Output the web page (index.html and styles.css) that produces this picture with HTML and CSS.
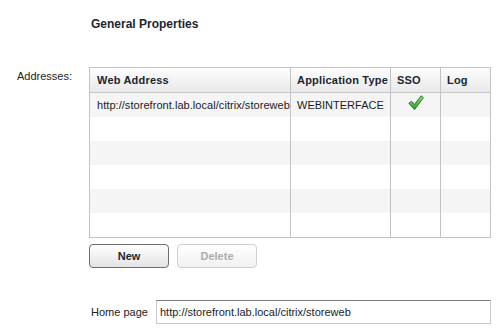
FILE: index.html
```html
<!DOCTYPE html>
<html>
<head>
<meta charset="utf-8">
<link rel="stylesheet" href="styles.css">
</head>
<body>
<div class="page">
  <h1 class="title">General Properties</h1>
  <div class="field-row">
    <div class="field-label">Addresses:</div>
    <div class="field-body">
      <div class="grid-table">
        <div class="th first">Web Address</div>
        <div class="th">Application Type</div>
        <div class="th">SSO</div>
        <div class="th">Log</div>

        <div class="td first alt">http://storefront.lab.local/citrix/storeweb</div>
        <div class="td alt">WEBINTERFACE</div>
        <div class="td alt check-cell">
          <svg width="16" height="16" viewBox="0 0 16 16">
            <defs>
              <linearGradient id="g" x1="0" y1="0" x2="0" y2="1">
                <stop offset="0" stop-color="#9be07a"/>
                <stop offset="1" stop-color="#1f9a22"/>
              </linearGradient>
            </defs>
            <polygon points="0.8,8.2 3.6,6.2 6.4,9.6 13,0.8 15.4,2.6 6.6,14.6" fill="url(#g)" stroke="#2d7f2a" stroke-width="1" stroke-linejoin="round"/>
          </svg>
        </div>
        <div class="td alt"></div>

        <div class="td first"></div><div class="td"></div><div class="td"></div><div class="td"></div>
        <div class="td first alt"></div><div class="td alt"></div><div class="td alt"></div><div class="td alt"></div>
        <div class="td first"></div><div class="td"></div><div class="td"></div><div class="td"></div>
        <div class="td first alt"></div><div class="td alt"></div><div class="td alt"></div><div class="td alt"></div>
        <div class="td first"></div><div class="td"></div><div class="td"></div><div class="td"></div>
      </div>
      <div class="buttons">
        <button class="btn">New</button>
        <button class="btn disabled">Delete</button>
      </div>
      <div class="home-row">
        <label class="home-label">Home page</label>
        <input class="home-input" type="text" value="http://storefront.lab.local/citrix/storeweb">
      </div>
    </div>
  </div>
</div>
</body>
</html>
```
FILE: styles.css
```css
html, body {
  margin: 0;
  padding: 0;
  background: #ffffff;
}
body {
  font-family: "Liberation Sans", Arial, sans-serif;
  font-size: 11px;
  color: #1c1c1c;
  width: 498px;
  height: 332px;
  overflow: hidden;
}
.page {
  padding-top: 17px;
}
.title {
  margin: 0 0 0 91px;
  font-size: 12px;
  line-height: 14px;
  font-weight: bold;
  color: #1b2633;
}
.field-row {
  display: grid;
  grid-template-columns: 89px 402px;
  margin-top: 36px;
}
.field-label {
  text-align: right;
  padding-right: 17px;
  padding-top: 3px;
  line-height: 13px;
  color: #222;
}
.grid-table {
  display: grid;
  grid-template-columns: 200px 100px 50px 50px;
  grid-template-rows: 25px;
  grid-auto-rows: 24px;
  border: 1px solid #c3c3c3;
  width: 400px;
}
.th, .td {
  border-left: 1px solid #c3c3c3;
  padding-left: 6px;
  line-height: 24px;
  white-space: nowrap;
  overflow: hidden;
}
.th.first, .td.first {
  border-left: none;
  padding-left: 7px;
}
.th {
  font-weight: bold;
  color: #1b2633;
  background: linear-gradient(#fdfdfd, #e9e9e9);
  border-bottom: 1px solid #c6c6c6;
  letter-spacing: 0.2px;
}
.td {
  background: #ffffff;
  color: #1c1c1c;
  line-height: 23px;
  padding-top: 1px;
}
.td.alt {
  background: #f5f5f5;
}
.td.first {
  letter-spacing: 0.05px;
}
.check-cell {
  display: flex;
  justify-content: center;
  align-items: flex-start;
  padding-left: 0;
  padding-top: 2px;
}
.check-cell svg {
  display: block;
}
.buttons {
  display: flex;
  gap: 8px;
  margin-top: 6px;
}
.btn {
  width: 80px;
  height: 24px;
  box-sizing: border-box;
  border: 1px solid #6e6e6e;
  border-radius: 4px;
  background: linear-gradient(#ffffff, #e4e4e4);
  font-family: "Liberation Sans", Arial, sans-serif;
  font-size: 11px;
  font-weight: bold;
  color: #1b2633;
  padding: 0;
}
.btn.disabled {
  border-color: #cfcfcf;
  color: #acacac;
  background: linear-gradient(#ffffff, #f1f1f1);
}
.home-row {
  display: flex;
  align-items: center;
  margin-top: 32px;
  padding-left: 2px;
}
.home-label {
  width: 65px;
  color: #222;
}
.home-input {
  width: 335px;
  height: 24px;
  box-sizing: border-box;
  border: 1px solid #c8c8c8;
  border-top-color: #7a7a7a;
  padding: 0 3px;
  font-family: "Liberation Sans", Arial, sans-serif;
  font-size: 11px;
  color: #1c1c1c;
  outline: none;
}
```
